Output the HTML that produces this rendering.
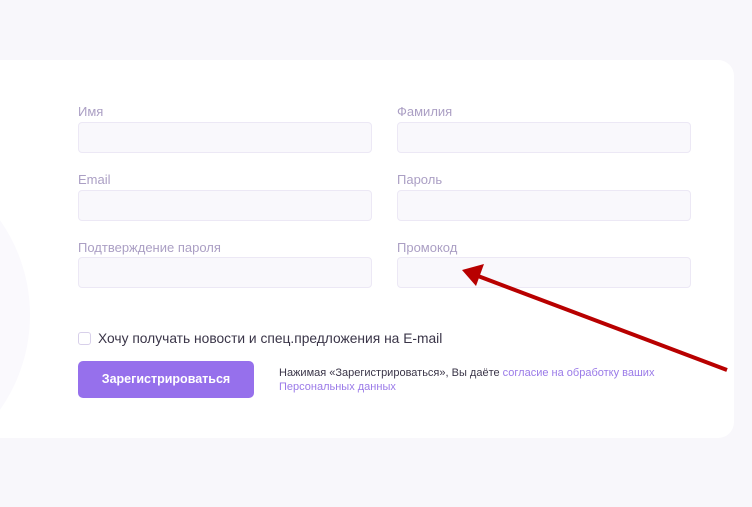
<!DOCTYPE html><html><head><meta charset="utf-8"><style>
body{margin:0;width:752px;height:507px;background:#f8f7fb;font-family:"Liberation Sans",sans-serif;position:relative;overflow:hidden}
.card{position:absolute;left:0;top:60px;width:734px;height:378px;background:#fff;border-radius:0 16px 16px 0;overflow:hidden}
.circ{position:absolute;left:-300px;top:90px;width:330px;height:330px;border-radius:50%;background:#faf9fd}
.lab{position:absolute;font-size:13px;color:#ab9fc4}
.in{position:absolute;width:292px;height:29px;background:#f9f8fc;border:1px solid #ece8f5;border-radius:4px}
</style></head><body>
<div class="card"><div class="circ"></div></div>
<div class="lab" style="left:78px;top:104px">Имя</div>
<div class="lab" style="left:397px;top:104px">Фамилия</div>
<div class="in" style="left:78px;top:122px"></div>
<div class="in" style="left:397px;top:122px"></div>
<div class="lab" style="left:78px;top:172px">Email</div>
<div class="lab" style="left:397px;top:172px">Пароль</div>
<div class="in" style="left:78px;top:190px"></div>
<div class="in" style="left:397px;top:190px"></div>
<div class="lab" style="left:78px;top:240px">Подтверждение пароля</div>
<div class="lab" style="left:397px;top:240px">Промокод</div>
<div class="in" style="left:78px;top:257px"></div>
<div class="in" style="left:397px;top:257px"></div>
<div style="position:absolute;left:78px;top:332px;width:11px;height:11px;border:1px solid #d8d0ea;border-radius:3px;background:#fff"></div>
<div style="position:absolute;left:98px;top:331px;font-size:13.8px;color:#3a3548">Хочу получать новости и спец.предложения на E-mail</div>
<div style="position:absolute;left:78px;top:361px;width:176px;height:37px;background:#9670ec;border-radius:5px;color:#fff;font-weight:bold;font-size:12.5px;line-height:37px;text-align:center">Зарегистрироваться</div>
<div style="position:absolute;left:279px;top:366px;width:420px;font-size:11px;line-height:14px;color:#3a3548">Нажимая «Зарегистрироваться», Вы даёте <span style="color:#9a7ae8">согласие на обработку ваших<br>Персональных данных</span></div>
<svg style="position:absolute;left:0;top:0" width="752" height="507"><line x1="727" y1="370" x2="478" y2="276" stroke="#b80000" stroke-width="4"/><polygon points="462,270 484,264 476,286" fill="#b80000"/></svg>
</body></html>
